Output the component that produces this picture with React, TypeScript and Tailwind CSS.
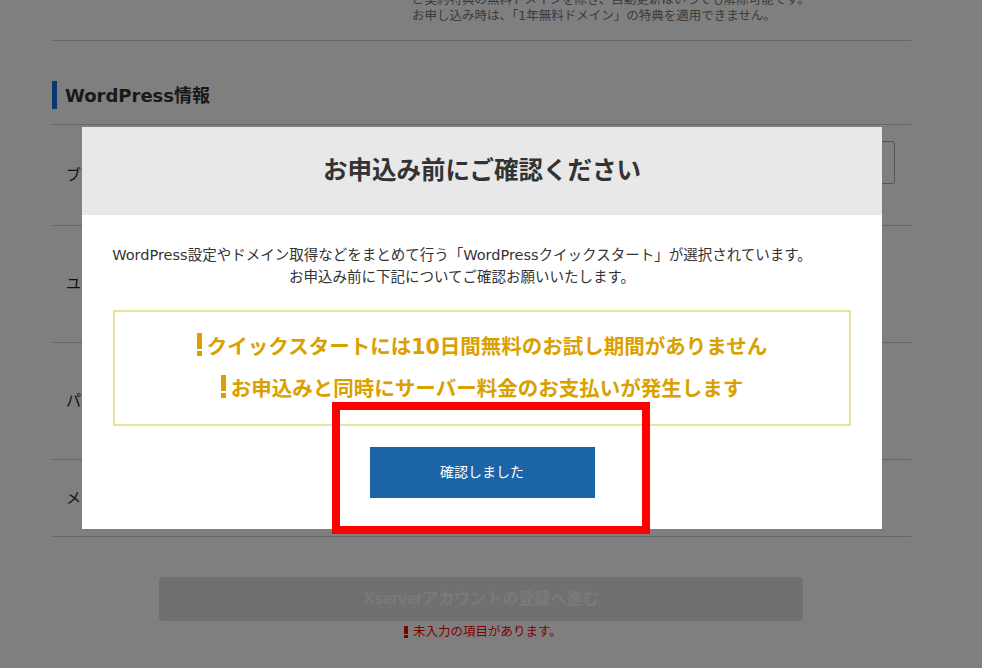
import React from "react";

function Bang({ color, bar, dot, w, gap }: { color: string; bar: string; dot: string; w: string; gap: string }) {
  return (
    <span className={`inline-flex flex-col items-center ${gap}`}>
      <span className={`${w} ${bar} ${color}`} />
      <span className={`${w} ${dot} ${color}`} />
    </span>
  );
}

export default function App() {
  return (
    <div className="relative w-full h-[668px] overflow-hidden bg-white font-[family-name:DejaVu_Sans,Noto_Sans_CJK_JP,sans-serif]">
      {/* page behind the dialog */}
      <div className="ml-[52px] w-[859px]">
        <div className="-mt-[8px] pb-[16px] border-b border-[#cccccc] pl-[360px] text-[12.5px] leading-[16px] text-[#777777] whitespace-nowrap">
          <p>ご契約特典の無料ドメインを除き、自動更新はいつでも解除可能です。</p>
          <p>お申し込み時は、「1年無料ドメイン」の特典を適用できません。</p>
        </div>

        <div className="mt-[40px] mb-[15px] h-[28px] flex items-stretch">
          <span className="w-[5px] bg-[#1a6ed8]" />
          <h2 className="ml-[8px] self-center text-[18px] font-bold text-[#333333]">WordPress情報</h2>
        </div>

        <div className="border-t border-[#cccccc]">
          <div className="h-[101px] border-b border-[#cccccc] flex">
            <div className="w-[360px] pl-[14px] self-center text-[15px] text-[#222222]">ブログ名</div>
            <div className="flex-1 pr-[16px] pt-[16px]">
              <div className="h-[43px] border border-[#aaaaaa] rounded-[3px] bg-white" />
            </div>
          </div>
          <div className="h-[117px] border-b border-[#cccccc] flex items-center">
            <div className="w-[360px] pl-[14px] text-[15px] text-[#222222]">ユーザー名</div>
          </div>
          <div className="h-[117px] border-b border-[#cccccc] flex items-center">
            <div className="w-[360px] pl-[14px] text-[15px] text-[#222222]">パスワード</div>
          </div>
          <div className="h-[77px] border-b border-[#cccccc] flex items-center">
            <div className="w-[360px] pl-[14px] text-[15px] text-[#222222]">メールアドレス</div>
          </div>
        </div>

        <button className="mt-[40px] ml-[107px] w-[644px] h-[44px] rounded-[4px] bg-[#e0e0e0] text-[#f5f5f5] font-bold text-[16px] font-[family-name:Liberation_Sans,Noto_Sans_CJK_JP,sans-serif] flex items-center justify-center">
          Xserverアカウントの登録へ進む
        </button>
        <div className="mt-[2px] flex items-center justify-center gap-[8px] h-[18px] text-[12.5px] text-[#ff0000]">
          <span className="translate-x-[3px] inline-flex">
            <Bang color="bg-[#ff0000]" w="w-[4px]" bar="h-[8px]" dot="h-[3px]" gap="gap-[1px]" />
          </span>
          <span>未入力の項目があります。</span>
        </div>
      </div>

      {/* overlay */}
      <div className="absolute inset-0 bg-black/50" />

      {/* dialog */}
      <div className="absolute left-[82px] top-[127px] w-[800px] bg-white">
        <div className="h-[88px] bg-[#e8e8e8] flex items-center justify-center">
          <h1 className="text-[24.5px] font-bold text-[#333333]">お申込み前にご確認ください</h1>
        </div>
        <div className="pt-[29px] pr-[40px] text-center text-[14.5px] leading-[22px] text-[#333333] whitespace-nowrap">
          <p>WordPress設定やドメイン取得などをまとめて行う「WordPressクイックスタート」が選択されています。</p>
          <p>お申込み前に下記についてご確認お願いいたします。</p>
        </div>
        <div className="mt-[22px] mx-[31px] border-2 border-[#e9e3a0] py-[14px] text-[20.5px] font-bold text-[#daa000]">
          <div className="h-[42px] flex items-center justify-center gap-[5px]">
            <span className="-translate-y-[3px] inline-flex">
              <Bang color="bg-[#daa000]" w="w-[5px]" bar="h-[16px]" dot="h-[5px]" gap="gap-[2px]" />
            </span>
            <span>クイックスタートには10日間無料のお試し期間がありません</span>
          </div>
          <div className="h-[42px] flex items-center justify-center gap-[5px]">
            <span className="-translate-y-[3px] inline-flex">
              <Bang color="bg-[#daa000]" w="w-[5px]" bar="h-[16px]" dot="h-[5px]" gap="gap-[2px]" />
            </span>
            <span>お申込みと同時にサーバー料金のお支払いが発生します</span>
          </div>
        </div>
        <div className="mt-[21px] pb-[31px] flex justify-center">
          <button className="w-[225px] h-[51px] bg-[#1b64a8] text-white text-[14px] flex items-center justify-center">
            確認しました
          </button>
        </div>
      </div>

      {/* annotation */}
      <div className="absolute left-[332px] top-[402px] w-[318px] h-[132px] border-[8px] border-[#ff0000]" />
    </div>
  );
}
